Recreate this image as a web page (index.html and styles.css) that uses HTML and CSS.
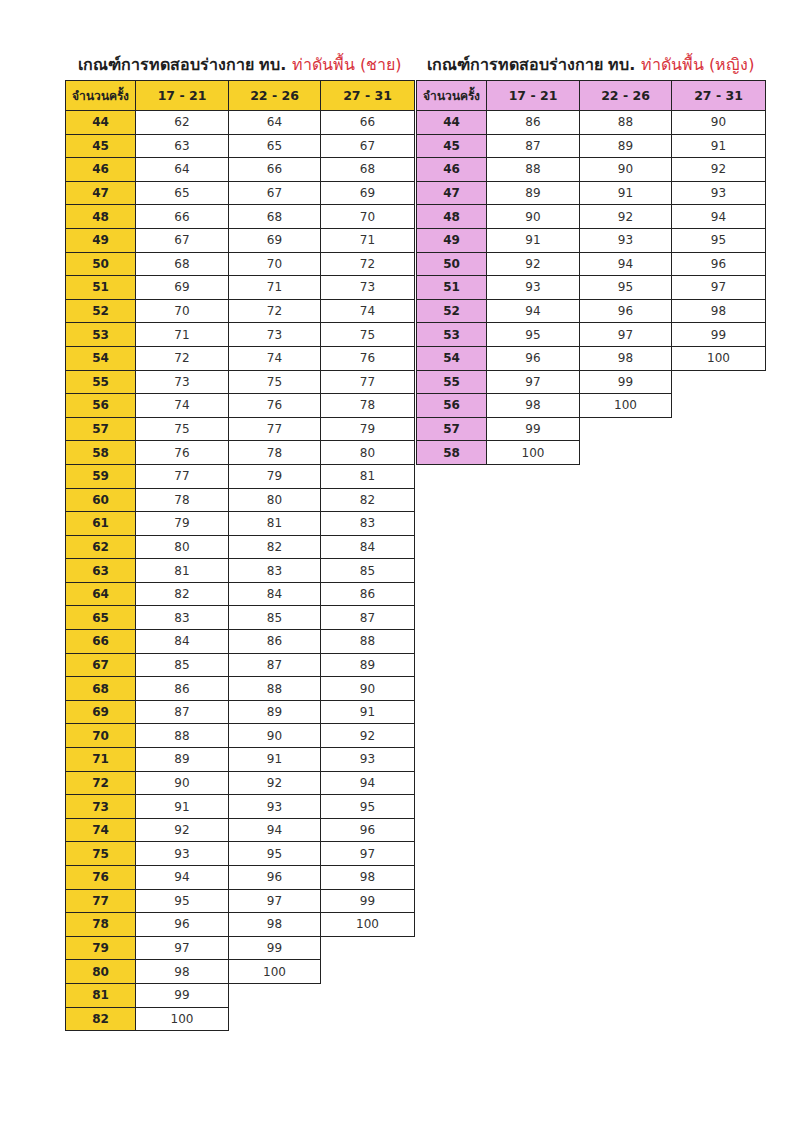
FILE: index.html
```html
<!DOCTYPE html>
<html lang="th">
<head>
<meta charset="utf-8">
<title>เกณฑ์การทดสอบร่างกาย ทบ.</title>
<link rel="stylesheet" href="styles.css">
</head>
<body>
<div class="page">
  <section class="panel">
    <h2 class="title">เกณฑ์การทดสอบร่างกาย ทบ. <span class="red">ท่าดันพื้น (ชาย)</span></h2>
    <table class="grid male">
      <colgroup><col class="c0"><col class="c1"><col class="c2"><col class="c3"></colgroup>
      <thead><tr><th class="hk">จำนวนครั้ง</th><th>17 - 21</th><th>22 - 26</th><th>27 - 31</th></tr></thead>
      <tbody>
        <tr><td class="k">44</td><td>62</td><td>64</td><td>66</td></tr>
        <tr><td class="k">45</td><td>63</td><td>65</td><td>67</td></tr>
        <tr><td class="k">46</td><td>64</td><td>66</td><td>68</td></tr>
        <tr><td class="k">47</td><td>65</td><td>67</td><td>69</td></tr>
        <tr><td class="k">48</td><td>66</td><td>68</td><td>70</td></tr>
        <tr><td class="k">49</td><td>67</td><td>69</td><td>71</td></tr>
        <tr><td class="k">50</td><td>68</td><td>70</td><td>72</td></tr>
        <tr><td class="k">51</td><td>69</td><td>71</td><td>73</td></tr>
        <tr><td class="k">52</td><td>70</td><td>72</td><td>74</td></tr>
        <tr><td class="k">53</td><td>71</td><td>73</td><td>75</td></tr>
        <tr><td class="k">54</td><td>72</td><td>74</td><td>76</td></tr>
        <tr><td class="k">55</td><td>73</td><td>75</td><td>77</td></tr>
        <tr><td class="k">56</td><td>74</td><td>76</td><td>78</td></tr>
        <tr><td class="k">57</td><td>75</td><td>77</td><td>79</td></tr>
        <tr><td class="k">58</td><td>76</td><td>78</td><td>80</td></tr>
        <tr><td class="k">59</td><td>77</td><td>79</td><td>81</td></tr>
        <tr><td class="k">60</td><td>78</td><td>80</td><td>82</td></tr>
        <tr><td class="k">61</td><td>79</td><td>81</td><td>83</td></tr>
        <tr><td class="k">62</td><td>80</td><td>82</td><td>84</td></tr>
        <tr><td class="k">63</td><td>81</td><td>83</td><td>85</td></tr>
        <tr><td class="k">64</td><td>82</td><td>84</td><td>86</td></tr>
        <tr><td class="k">65</td><td>83</td><td>85</td><td>87</td></tr>
        <tr><td class="k">66</td><td>84</td><td>86</td><td>88</td></tr>
        <tr><td class="k">67</td><td>85</td><td>87</td><td>89</td></tr>
        <tr><td class="k">68</td><td>86</td><td>88</td><td>90</td></tr>
        <tr><td class="k">69</td><td>87</td><td>89</td><td>91</td></tr>
        <tr><td class="k">70</td><td>88</td><td>90</td><td>92</td></tr>
        <tr><td class="k">71</td><td>89</td><td>91</td><td>93</td></tr>
        <tr><td class="k">72</td><td>90</td><td>92</td><td>94</td></tr>
        <tr><td class="k">73</td><td>91</td><td>93</td><td>95</td></tr>
        <tr><td class="k">74</td><td>92</td><td>94</td><td>96</td></tr>
        <tr><td class="k">75</td><td>93</td><td>95</td><td>97</td></tr>
        <tr><td class="k">76</td><td>94</td><td>96</td><td>98</td></tr>
        <tr><td class="k">77</td><td>95</td><td>97</td><td>99</td></tr>
        <tr><td class="k">78</td><td>96</td><td>98</td><td>100</td></tr>
        <tr><td class="k">79</td><td>97</td><td>99</td></tr>
        <tr><td class="k">80</td><td>98</td><td>100</td></tr>
        <tr><td class="k">81</td><td>99</td></tr>
        <tr><td class="k">82</td><td>100</td></tr>
      </tbody>
    </table>
  </section>
  <section class="panel">
    <h2 class="title">เกณฑ์การทดสอบร่างกาย ทบ. <span class="red">ท่าดันพื้น (หญิง)</span></h2>
    <table class="grid female">
      <colgroup><col class="c0"><col class="c1"><col class="c2"><col class="c3"></colgroup>
      <thead><tr><th class="hk">จำนวนครั้ง</th><th>17 - 21</th><th>22 - 26</th><th>27 - 31</th></tr></thead>
      <tbody>
        <tr><td class="k">44</td><td>86</td><td>88</td><td>90</td></tr>
        <tr><td class="k">45</td><td>87</td><td>89</td><td>91</td></tr>
        <tr><td class="k">46</td><td>88</td><td>90</td><td>92</td></tr>
        <tr><td class="k">47</td><td>89</td><td>91</td><td>93</td></tr>
        <tr><td class="k">48</td><td>90</td><td>92</td><td>94</td></tr>
        <tr><td class="k">49</td><td>91</td><td>93</td><td>95</td></tr>
        <tr><td class="k">50</td><td>92</td><td>94</td><td>96</td></tr>
        <tr><td class="k">51</td><td>93</td><td>95</td><td>97</td></tr>
        <tr><td class="k">52</td><td>94</td><td>96</td><td>98</td></tr>
        <tr><td class="k">53</td><td>95</td><td>97</td><td>99</td></tr>
        <tr><td class="k">54</td><td>96</td><td>98</td><td>100</td></tr>
        <tr><td class="k">55</td><td>97</td><td>99</td></tr>
        <tr><td class="k">56</td><td>98</td><td>100</td></tr>
        <tr><td class="k">57</td><td>99</td></tr>
        <tr><td class="k">58</td><td>100</td></tr>
      </tbody>
    </table>
  </section>
</div>
</body>
</html>
```
FILE: styles.css
```css
html, body {
  margin: 0;
  padding: 0;
  background: #ffffff;
}

body {
  font-family: "DejaVu Sans", "Noto Sans", sans-serif;
  color: #2a2a2a;
}

.page {
  display: flex;
  gap: 2px;
  padding: 48px 0 0 65px;
}

.panel {
  display: flex;
  flex-direction: column;
  width: 349px;
}

.title {
  margin: 0;
  height: 32px;
  line-height: 34px;
  text-align: center;
  font-size: 16px;
  font-weight: bold;
  color: #1e1e1e;
  white-space: nowrap;
}

.title .red {
  color: #d8323c;
  font-weight: normal;
}

.grid {
  border-collapse: collapse;
  table-layout: fixed;
  width: 349px;
}

.grid .c0 { width: 70px; }
.grid .c1 { width: 93px; }
.grid .c2 { width: 92px; }
.grid .c3 { width: 94px; }

.grid th,
.grid td {
  border: 1.5px solid #222222;
  padding: 0;
  text-align: center;
  vertical-align: middle;
  font-size: 12px;
}

.grid th {
  height: 29px;
  font-size: 12.5px;
  font-weight: bold;
  color: #222222;
}

.grid th.hk {
  font-size: 12px;
}

.grid td {
  height: 22.6px;
  color: #333333;
}

.grid td.k {
  font-weight: bold;
  color: #222222;
}

.male th,
.male td.k {
  background: #f7d12a;
}

.female th,
.female td.k {
  background: #e8aee4;
}
```
